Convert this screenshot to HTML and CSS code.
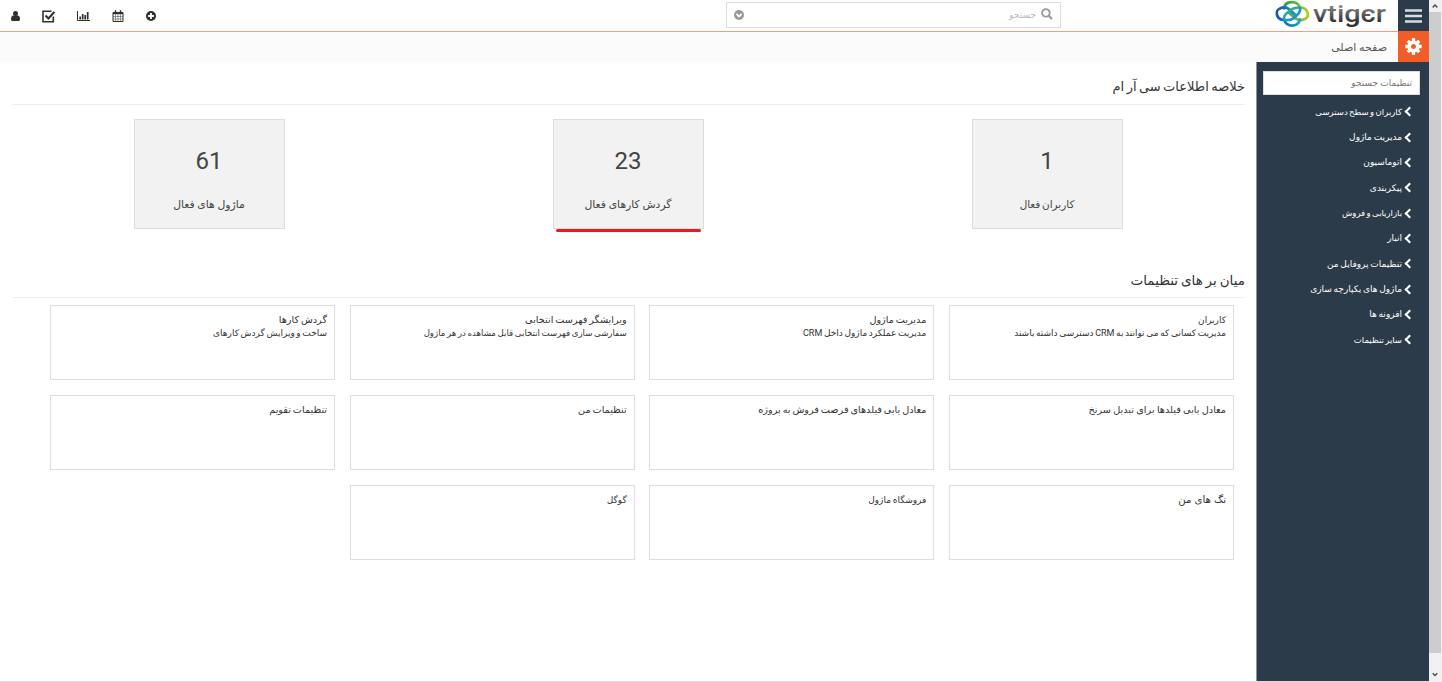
FILE: index.html
```
<!DOCTYPE html>
<html lang="fa" dir="rtl">
<head>
<meta charset="utf-8">
<title>vtiger</title>
<link rel="stylesheet" href="styles.css">
</head>
<body>
<div class="window">
<div class="scrollbar">
  <svg class="arrow" viewBox="0 0 13 12"><path d="M4 7.500 6.500 5 9 7.500" fill="none" stroke="#505050" stroke-width="1.600"/></svg>
  <div class="thumb"></div>
  <svg class="arrow" viewBox="0 0 13 12"><path d="M4 4 6.500 6.500 9 4" fill="none" stroke="#505050" stroke-width="1.600"/></svg>
</div>
<div class="page">
  <header class="topbar">
    <div class="menu-button"><svg width="17" height="14" viewBox="0 0 17 14"><path d="M0 1.500h17M0 7h17M0 12.500h17" stroke="#d9dde0" stroke-width="2.600"/></svg></div>
    <svg class="logo" width="112" height="30" viewBox="0 0 112 30" direction="ltr">
      <defs>
        <linearGradient id="word" x1="0" y1="0" x2="0" y2="1"><stop offset="0.2" stop-color="#8a8a8a"/><stop offset="0.8" stop-color="#303030"/></linearGradient>
        <linearGradient id="green" x1="0" y1="0" x2="1" y2="0"><stop offset="0" stop-color="#1d9a58"/><stop offset="1" stop-color="#b3cf1c"/></linearGradient>
        <linearGradient id="blue" x1="0" y1="0" x2="1" y2="0"><stop offset="0" stop-color="#1b57a6"/><stop offset="1" stop-color="#16a0d8"/></linearGradient>
      </defs>
      <g fill="none" stroke-width="2.700" stroke-linecap="round">
        <path d="M9 8.500C10 .5 22 0 25 7.500c8.500 0 10 9 5 11.500-3 1.500-7 1.500-10-1l-6-5.500" stroke="url(#green)"/>
        <path d="M25 19.500c-2 8-13 8-16 .5-8.500-.5-9-10-4-11.500 3-1.500 7-1 9.500 1l6 5.500" stroke="url(#blue)"/>
        <path d="M9 20c-.5-3 .5-5 3-7l3-2.500c3-2.500 6-3 10-3" stroke="#2cae9a"/>
        <path d="M25 8c.5 3-.5 5-3 7l-3 3c-3 2.500-6 2.500-10 2" stroke="#1697ce"/>
      </g>
      <text class="wordmark" x="38" y="22" textLength="73" lengthAdjust="spacingAndGlyphs" fill="url(#word)">vtigєr</text>
    </svg>
    <div class="search">
      <svg width="12" height="12" viewBox="0 0 12 12"><circle cx="4.900" cy="4.900" r="3.800" fill="none" stroke="#999" stroke-width="1.800"/><path d="m7.700 7.700 3.300 3.300" stroke="#999" stroke-width="2.200"/></svg>
      <span class="search-hint">جستجو</span>
      <svg class="search-more" width="10" height="10" viewBox="0 0 10 10"><circle cx="5" cy="5" r="5" fill="#999"/><path d="M2.400 3.900 5 6.500l2.600-2.600" fill="none" stroke="#fff" stroke-width="1.600"/></svg>
    </div>
    <nav class="tools">
      <svg width="10" height="10" viewBox="0 0 10 10"><circle cx="5" cy="5" r="5" fill="#2f2f2f"/><path d="M5 2.100v5.800M2.100 5h5.800" stroke="#fff" stroke-width="1.800"/></svg>
      <svg width="12" height="12" viewBox="0 0 12 12"><path d="M1 2.500h10v9H1z" fill="#fff" stroke="#2f2f2f"/><path d="M1 2h10v2.200H1z" fill="#2f2f2f"/><path d="M3.500 4v7.500M6 4v7.500M8.500 4v7.500M1 6.500h10M1 9h10" stroke="#555" stroke-width=".6"/><path d="M3.500 .3v3M8.500 .3v3" stroke="#2f2f2f" stroke-width="1.500"/></svg>
      <svg width="13" height="10" viewBox="0 0 13 10"><path d="M.5 0v9.500H13" fill="none" stroke="#2f2f2f"/><path d="M3.200 8.500V5.500M5.700 8.500V3M8.200 8.500V4M10.700 8.500V1" stroke="#2f2f2f" stroke-width="1.700"/></svg>
      <svg width="13" height="13" viewBox="0 0 13 13"><path d="M11.300 6.500v5.200H1V1.300h8.500" fill="none" stroke="#2f2f2f" stroke-width="1.600"/><path d="m3.500 5.500 3 3L12.300 2" fill="none" stroke="#2f2f2f" stroke-width="2"/></svg>
      <svg width="9" height="10" viewBox="0 0 9 10"><circle cx="4.500" cy="2.600" r="2.500" fill="#2f2f2f"/><path d="M2 4.500h5C8.500 5 9 6.500 9 8.200 9 9.300 8.300 10 7.300 10H1.700C.7 10 0 9.300 0 8.200 0 6.500.5 5 2 4.500z" fill="#2f2f2f"/></svg>
    </nav>
  </header>
  <div class="crumbs">
    <div class="gear"><svg width="17" height="17" viewBox="-8.500 -8.500 17 17"><circle r="4.300" fill="none" stroke="#fff" stroke-width="3.600"/><path d="M0-8.200V-5M0 5v3.200M-8.200 0H-5M5 0h3.200M-5.700-5.700l2.200 2.200M3.500 3.500l2.200 2.200M5.700-5.700 3.500-3.500M-3.500 3.500l-2.200 2.200" stroke="#fff" stroke-width="3.300"/></svg></div>
    <span class="crumb">صفحه اصلی</span>
  </div>
  <div class="body">
    <aside class="sidebar">
      <div class="side-search">تنظیمات جستجو</div>
      <ul class="side-list">
        <li class="tight">کاربران و سطح دسترسی</li>
        <li>مدیریت ماژول</li>
        <li>اتوماسیون</li>
        <li>پیکربندی</li>
        <li class="tight">بازاریابی و فروش</li>
        <li>انبار</li>
        <li>تنظیمات پروفایل من</li>
        <li>ماژول های یکپارچه سازی</li>
        <li>افزونه ها</li>
        <li class="tight">سایر تنظیمات</li>
      </ul>
    </aside>
    <main class="content">
      <h4 class="heading tight">خلاصه اطلاعات سی آر ام</h4>
      <section class="summary">
        <div class="stat"><b>1</b><span class="tight">کاربران فعال</span></div>
        <div class="stat marked"><b>23</b><span>گردش کارهای فعال</span></div>
        <div class="stat"><b>61</b><span>ماژول های فعال</span></div>
      </section>
      <h4 class="heading">میان بر های تنظیمات</h4>
      <section class="shortcuts">
        <div class="card"><h5 class="tight">کاربران</h5><p>مدیریت کسانی که می توانند به CRM دسترسی داشته باشند</p></div>
        <div class="card"><h5>مدیریت ماژول</h5><p>مدیریت عملکرد ماژول داخل CRM</p></div>
        <div class="card"><h5>ویرایشگر فهرست انتخابی</h5><p class="snug">سفارشی سازی فهرست انتخابی قابل مشاهده در هر ماژول</p></div>
        <div class="card"><h5>گردش کارها</h5><p>ساخت و ویرایش گردش کارهای</p></div>
        <div class="card"><h5 class="loose">معادل یابی فیلدها برای تبدیل سرنخ</h5></div>
        <div class="card"><h5>معادل یابی فیلدهای فرصت فروش به پروژه</h5></div>
        <div class="card"><h5>تنظیمات من</h5></div>
        <div class="card"><h5>تنظیمات تقویم</h5></div>
        <div class="card"><h5 class="wide">تگ های من</h5></div>
        <div class="card"><h5 class="tight">فروشگاه ماژول</h5></div>
        <div class="card"><h5 class="tight">گوگل</h5></div>
      </section>
    </main>
  </div>
</div>
</div>
</body>
</html>
```
FILE: styles.css
```
* { box-sizing: border-box; }
body, h4, h5, p, ul { margin: 0; padding: 0; font-weight: normal; }
body { background: #fff; color: #333; font-family: Roboto, "DejaVu Sans", sans-serif; font-size: 10px; overflow: hidden; }
svg { display: block; flex: none; }
.window { display: flex; height: 682px; }
.scrollbar { width: 13px; flex: none; background: #f0f0f0; display: flex; flex-direction: column; padding-right: 1px; }
.arrow { width: 12px; height: 12px; }
.thumb { height: 641px; background: #cdcdcd; }
.scrollbar .arrow:last-child { margin-top: 16px; }
.page { flex: 1; min-width: 0; display: flex; flex-direction: column; border-bottom: 1px solid #ddd; }
.topbar { height: 32px; flex: none; border-bottom: 1px solid #f29f80; display: flex; align-items: flex-start; }
.menu-button, .gear { width: 31px; height: 31px; flex: none; background: #2c3b49; display: flex; align-items: center; justify-content: center; }
.logo { margin: 0 11px 0 0; overflow: visible; }
.wordmark { font-family: Roboto, sans-serif; font-size: 23.500px; font-weight: 500; }
.search { width: 335px; flex: none; height: 26px; margin: 2px 214px 0 0; border: 1px solid #ddd; display: flex; align-items: center; padding: 0 7px; }
.search svg:first-child { margin-top: -2px; }
.search-hint { color: #bbb; font-size: 9px; margin-right: 5px; }
.search-more { margin-right: auto; }
.tools { margin-right: auto; height: 32px; padding-left: 11px; display: flex; align-items: center; gap: 22px; }
.crumbs { height: 30px; flex: none; background: #fbfbfb; display: flex; align-items: center; }
.gear { background: #f05d28; margin-top: -1px; position: relative; }
.crumb { margin-right: 11px; font-size: 11px; color: #555; }
.body { flex: 1; display: flex; }
.sidebar { width: 173px; flex: none; background: #2c3b49; border-left: 1px solid #8b949b; padding: 9px 9px 0 6px; }
.side-search { height: 24px; background: #fff; border: 1px solid #ddd; color: #777; font-size: 9px; line-height: 22px; padding: 0 7px; }
.side-list { list-style: none; padding: 4px 6px 0 0; color: #fff; font-size: 9px; word-spacing: -0.500px; }
.side-list li { height: 25.350px; display: flex; align-items: center; gap: 4px; white-space: nowrap; }
.side-list li::before { content: ""; width: 5px; height: 5px; border: solid #fff; border-width: 0 0 2px 2px; transform: rotate(45deg); margin-right: 1px; }
.side-list .tight { font-size: 8.500px; word-spacing: -0.700px; }
.content { flex: 1; min-width: 0; padding: 14px 11px 0 12px; }
.heading { height: 29px; border-bottom: 1px solid #eee; font-size: 13.500px; line-height: 22px; white-space: nowrap; word-spacing: -0.500px; }
.heading.tight { font-size: 13px; word-spacing: -0.800px; }
.summary { height: 164px; padding-top: 14px; display: grid; grid-template-columns: repeat(3, 419px); margin: 0 -13px 0 -11px; justify-items: center; }
.stat { width: 151px; height: 110px; background: #f2f2f2; border: 1px solid #ddd; text-align: center; color: #444; position: relative; margin-left: -3px; }
.stat b { display: block; font: 24px/28px Roboto, sans-serif; margin-top: 27px; }
.stat span { display: block; font-size: 10.800px; line-height: 16px; margin-top: 22px; }
.stat .tight { font-size: 10.400px; word-spacing: -0.800px; }
.marked::after { content: ""; position: absolute; left: 2px; right: 2px; bottom: -4px; height: 3px; border-radius: 2px; background: #e8191f; }
.shortcuts { display: grid; grid-template-columns: repeat(4, 285px); grid-auto-rows: 75px; gap: 15px 14.670px; padding: 8px 11px 0 0; margin-top: -1px; }
.card { border: 1px solid #ddd; padding: 7px 7px 0; white-space: nowrap; }
.card h5 { font-size: 9.700px; line-height: 14px; word-spacing: -0.500px; }
.card h5.tight { font-size: 9px; }
.card h5.loose { word-spacing: -0.100px; }
.card h5.wide { font-size: 10.200px; word-spacing: 0.600px; }
.card p { font-size: 9px; line-height: 13px; word-spacing: -0.600px; }
.card p.snug { font-size: 8.600px; word-spacing: -0.500px; }
```
